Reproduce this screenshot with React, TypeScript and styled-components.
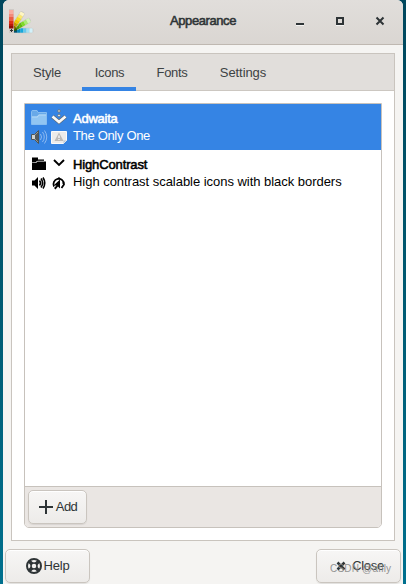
import React from "react";
import styled, { createGlobalStyle, css } from "styled-components";

const Global = createGlobalStyle`
  * { box-sizing: border-box; }
  html, body { margin: 0; padding: 0; overflow: hidden; }
  body { font-family: "Liberation Sans", Arial, sans-serif; font-size: 13px; color: #2e3436; }
`;

const Desktop = styled.div`
  width: 406px;
  height: 584px;
  padding: 0 3px;
  overflow: hidden;
  background: linear-gradient(#00475d, #005369 35%, #00708e);
`;

const Window = styled.div`
  height: 584px;
  display: flex;
  flex-direction: column;
  background: #f5f4f2;
  border-radius: 6px 6px 0 0;
  overflow: hidden;
`;

const TitleBar = styled.header`
  height: 45px;
  flex: none;
  display: grid;
  grid-template-columns: 137px 1fr 137px;
  align-items: center;
  padding: 0 6px;
  background: linear-gradient(#e1dedb, #dad6d2);
  border-bottom: 1px solid #bfb8b1;
  svg { display: block; }
`;

const Label = styled.span<{ $track?: number; $heavy?: boolean; $size?: number }>`
  display: block;
  white-space: nowrap;
  font-size: ${(p) => p.$size ?? 13}px;
  letter-spacing: ${(p) => p.$track ?? 0}px;
  ${(p) => p.$heavy && css`-webkit-text-stroke: 0.55px currentColor;`}
`;

const Title = styled.div`
  display: flex;
  justify-content: center;
  padding-bottom: 4px;
`;

const WindowControls = styled.div`
  display: flex;
  gap: 24px;
  justify-content: flex-end;
  padding: 0 9px 2px 0;
`;

const Notebook = styled.section`
  margin: 8px 8px 0;
  height: 488px;
  flex: none;
  background: #fff;
  border: 1px solid #c9c4be;
`;

const Tabs = styled.nav`
  display: flex;
  gap: 10px;
  height: 37px;
  padding-left: 9px;
  background: #e1dedb;
  border-bottom: 1px solid #ccc7c1;
`;

const Tab = styled.button<{ $active?: boolean; $width: number }>`
  width: ${(p) => p.$width}px;
  height: 37px;
  padding: 0 0 1px 1px;
  display: flex;
  align-items: center;
  justify-content: center;
  border: 0;
  background: none;
  font: inherit;
  color: #3d4244;
  box-shadow: ${(p) => (p.$active ? "inset 0 -4px #3584e4" : "none")};
`;

const ListFrame = styled.div`
  margin: 12px;
  height: 425px;
  display: flex;
  flex-direction: column;
  border: 1px solid #c7c2bc;
  border-radius: 0 0 5px 5px;
  overflow: hidden;
`;

const List = styled.div`
  flex: 1;
`;

const Row = styled.div<{ $selected?: boolean }>`
  height: 46px;
  display: flex;
  gap: 5px;
  padding: 5px 0 0 5px;
  color: ${(p) => (p.$selected ? "#fff" : "#000")};
  background: ${(p) => (p.$selected ? "#3584e4" : "#fff")};
`;

const Swatches = styled.div`
  display: grid;
  grid-template: 18px 18px / 18px 18px;
  gap: 1px 2px;
  svg { display: block; }
`;

const RowText = styled.div`
  padding-top: 1px;
  line-height: 17px;
`;

const ActionBar = styled.div`
  height: 41px;
  padding: 3px;
  background: #eae6e3;
  border-top: 1px solid #c7c2bc;
`;

const Button = styled.button<{ $width: number; $gap?: number }>`
  width: ${(p) => p.$width}px;
  height: 34px;
  padding: 0 0 1px;
  display: flex;
  align-items: center;
  justify-content: center;
  gap: ${(p) => p.$gap ?? 2}px;
  font: inherit;
  color: #2e3436;
  border: 1px solid #cac5bf;
  border-radius: 5px;
  background: linear-gradient(#f7f6f5, #edebe9);
  box-shadow: inset 0 1px #fff, 0 1px 1px rgba(0, 0, 0, 0.08);
`;

const Footer = styled.footer`
  display: flex;
  justify-content: space-between;
  padding: 8px 2px 0;
`;

const CloseSlot = styled.div`
  position: relative;
`;

const Watermark = styled.div`
  position: absolute;
  left: 14px;
  top: 14px;
  color: #8e8e8e;
  pointer-events: none;
  opacity: 0.95;
`;

const Blade = ({ angle, colors }: { angle: number; colors: string[] }) => (
  <g transform={`rotate(${angle} 2.5 21.5)`}>
    <rect x="7" y="18.800" width="17.500" height="5.400" rx="2" fill="#c9c8c3" />
    {colors.map((c, i) => (
      <rect key={c} x={5 + i * 3.1} y="19.300" width="3.100" height="4.400" fill={c} />
    ))}
  </g>
);

const Palette = () => (
  <svg width="26" height="26" viewBox="0 0 26 26">
    <Blade angle={0} colors={["#02506f", "#0789ba", "#16a8dc", "#65c9ec", "#a0e0f5", "#d2f1fa"]} />
    <Blade angle={-30} colors={["#2d6402", "#4e9a06", "#62b80e", "#7ddb25", "#a8ec70", "#d4f5b8"]} />
    <Blade angle={-58} colors={["#8d7200", "#c4a000", "#edc900", "#f9dc20", "#fbe870", "#fff6c2"]} />
    <rect width="5" height="24" fill="#cfcac6" />
    <path fill="#f8aba0" d="M0 1h4.500v4H0z" />
    <path fill="#f3897a" d="M0 5h4.500v3H0z" />
    <path fill="#ec5d45" d="M0 8h4.500v4H0z" />
    <path fill="#dc3018" d="M0 12h4.500v3H0z" />
    <path fill="#b91b0a" d="M0 15h4.500v2H0z" />
    <path fill="#8f1005" d="M0 17h4.500v2.500H0z" />
    <path fill="#333" d="M2 20h1v1h1v1H3v1H2v-1H1v-1h1z" />
  </svg>
);

const Minimize = () => (
  <svg width="16" height="16"><path fill="#fff" d="M4 12h8v1H4z" opacity=".7" /><path fill="#2e3436" d="M4 10h8v2H4z" /></svg>
);
const Maximize = () => (
  <svg width="16" height="16"><path fill="#fff" d="M4 12h8v1H4z" opacity=".7" /><path fill="none" stroke="#2e3436" strokeWidth="2" d="M5 5h6v6H5z" /></svg>
);
const Cross = ({ heavy = false }: { heavy?: boolean }) => (
  <svg width="16" height="16"><path fill="none" stroke="#2e3436" strokeWidth={heavy ? 2.5 : 2} d="M4.500 4.500l7 7M11.500 4.500l-7 7" /></svg>
);

const BlueFolder = () => (
  <svg width="18" height="18"><path fill="#68a9e8" stroke="#87bdf0" d="M1.500 15V2.500Q1.500 1.500 3 1.500h4l1 2h8.500V15.500h-15z" /><path fill="#91c5f2" d="M2 7.500h5l2-2h7V15H2z" /><path fill="#b5d9f6" d="M2 7.500h5l2-2h7v1H9l-1.500 2H2z" /></svg>
);
const OrnateChevron = () => (
  <svg width="18" height="18"><path fill="none" stroke="#62676b" strokeWidth="4" d="M2.500 7.500L9 13l6.500-5.500" /><path fill="none" stroke="#f9f9f8" strokeWidth="2.700" d="M2.500 7.500L9 13l6.500-5.500" /><circle cx="9" cy="2" r="1.300" fill="#ddd" stroke="#596772" strokeWidth=".7" /><circle cx="9" cy="6.500" r="1.300" fill="#eee" stroke="#596772" strokeWidth=".7" /></svg>
);
const ColorSpeaker = () => (
  <svg width="18" height="18"><path fill="#d2d3cf" stroke="#4e5555" d="M1.500 6.500h3l4-4v13l-4-4h-3z" /><path fill="#555a59" d="M5 7l3-3v10l-3-3z" /><path fill="none" stroke="#8fbaf0" d="M10.500 6q2 3 0 6M12.500 4q3.500 5 0 10M14.500 2.500q4.500 6.500 0 13" /></svg>
);
const MissingImage = () => (
  <svg width="18" height="18"><path fill="#ecebea" stroke="#fafafa" d="M1.500 3.500h15v9l-3 3h-12z" /><path fill="#bcbab8" d="M9 4.500l4.500 8.500h-9z" /><path fill="#f7f7f7" d="M8.300 7.500h1.400V10H8.300zM8.300 11h1.400v1H8.300z" /><path fill="#bcc7d3" d="M13.500 15.500v-3h3z" /></svg>
);
const BlackFolder = () => (
  <svg width="18" height="18"><path d="M2 15V2.500h6v2h6V6H7L5.500 7.500H2z" /><path d="M2 8h4l1.500-1.500H16V15H2z" /><path fill="none" stroke="#aaa" strokeWidth=".6" d="M3 7.500h3l1.500-1.500H14" /></svg>
);
const Chevron = () => (
  <svg width="18" height="18"><path fill="none" stroke="#000" strokeWidth="1.900" d="M4 5l5 5 5-5" /></svg>
);
const BlackSpeaker = () => (
  <svg width="18" height="18"><path d="M2 6.500h2.500L8 3v12l-3.500-3.500H2z" /><path fill="none" stroke="#000" strokeWidth="1.600" d="M9.500 6.500q2 2.500 0 5M11 4.500q3.300 4.500 0 9M13 3.500q3.500 5.500 0 11" /></svg>
);
const LoadingDial = () => (
  <svg width="18" height="18"><path fill="none" stroke="#000" strokeWidth="1.800" d="M4 12.500A5.300 5.300 0 1 1 14 10.500L11.500 14" /><path d="M10 5.500v9l-2-2-2.500 3-1.500-1.500 2.500-2.500H3.500z" /><path stroke="#000" d="M9 3v2M12 9h2" /></svg>
);
const Plus = () => (
  <svg width="16" height="16"><path fill="#2e3436" d="M7 1h2v6h6v2H9v6H7V9H1V7h6z" /></svg>
);
const Lifebuoy = () => (
  <svg width="16" height="16" viewBox="0 0 16 16"><circle cx="8" cy="8" r="7" fill="none" stroke="#2e3436" strokeWidth="2" /><circle cx="8" cy="8" r="3" fill="none" stroke="#2e3436" strokeWidth="1.500" /><path stroke="#2e3436" strokeWidth="3.500" d="M3 3l3 3M10 10l3 3M13 3l-3 3M6 10l-3 3" /></svg>
);

export default function App() {
  return (
    <>
      <Global />
      <Desktop>
        <Window>
          <TitleBar>
            <Palette />
            <Title><Label $heavy $track={-0.42}>Appearance</Label></Title>
            <WindowControls><Minimize /><Maximize /><Cross /></WindowControls>
          </TitleBar>
          <Notebook>
            <Tabs>
              <Tab $width={51}><Label $track={-0.15}>Style</Label></Tab>
              <Tab $width={54} $active><Label $track={-0.3}>Icons</Label></Tab>
              <Tab $width={51}><Label $track={-0.3}>Fonts</Label></Tab>
              <Tab $width={71}><Label $track={-0.08}>Settings</Label></Tab>
            </Tabs>
            <ListFrame>
              <List>
                <Row $selected>
                  <Swatches><BlueFolder /><OrnateChevron /><ColorSpeaker /><MissingImage /></Swatches>
                  <RowText>
                    <Label $heavy $track={-0.25}>Adwaita</Label>
                    <Label $track={-0.33}>The Only One</Label>
                  </RowText>
                </Row>
                <Row>
                  <Swatches><BlackFolder /><Chevron /><BlackSpeaker /><LoadingDial /></Swatches>
                  <RowText>
                    <Label $heavy $track={-0.13}>HighContrast</Label>
                    <Label $track={-0.035}>High contrast scalable icons with black borders</Label>
                  </RowText>
                </Row>
              </List>
              <ActionBar>
                <Button $width={59}><Plus /><Label $track={-0.6}>Add</Label></Button>
              </ActionBar>
            </ListFrame>
          </Notebook>
          <Footer>
            <Button $width={85}><Lifebuoy /><Label $track={-0.2}>Help</Label></Button>
            <CloseSlot>
              <Button $width={85} $gap={3}><Cross heavy /><Label $track={-0.3}>Close</Label></Button>
              <Watermark><Label $size={10} $track={0.2}>CSDN @aflly</Label></Watermark>
            </CloseSlot>
          </Footer>
        </Window>
      </Desktop>
    </>
  );
}
